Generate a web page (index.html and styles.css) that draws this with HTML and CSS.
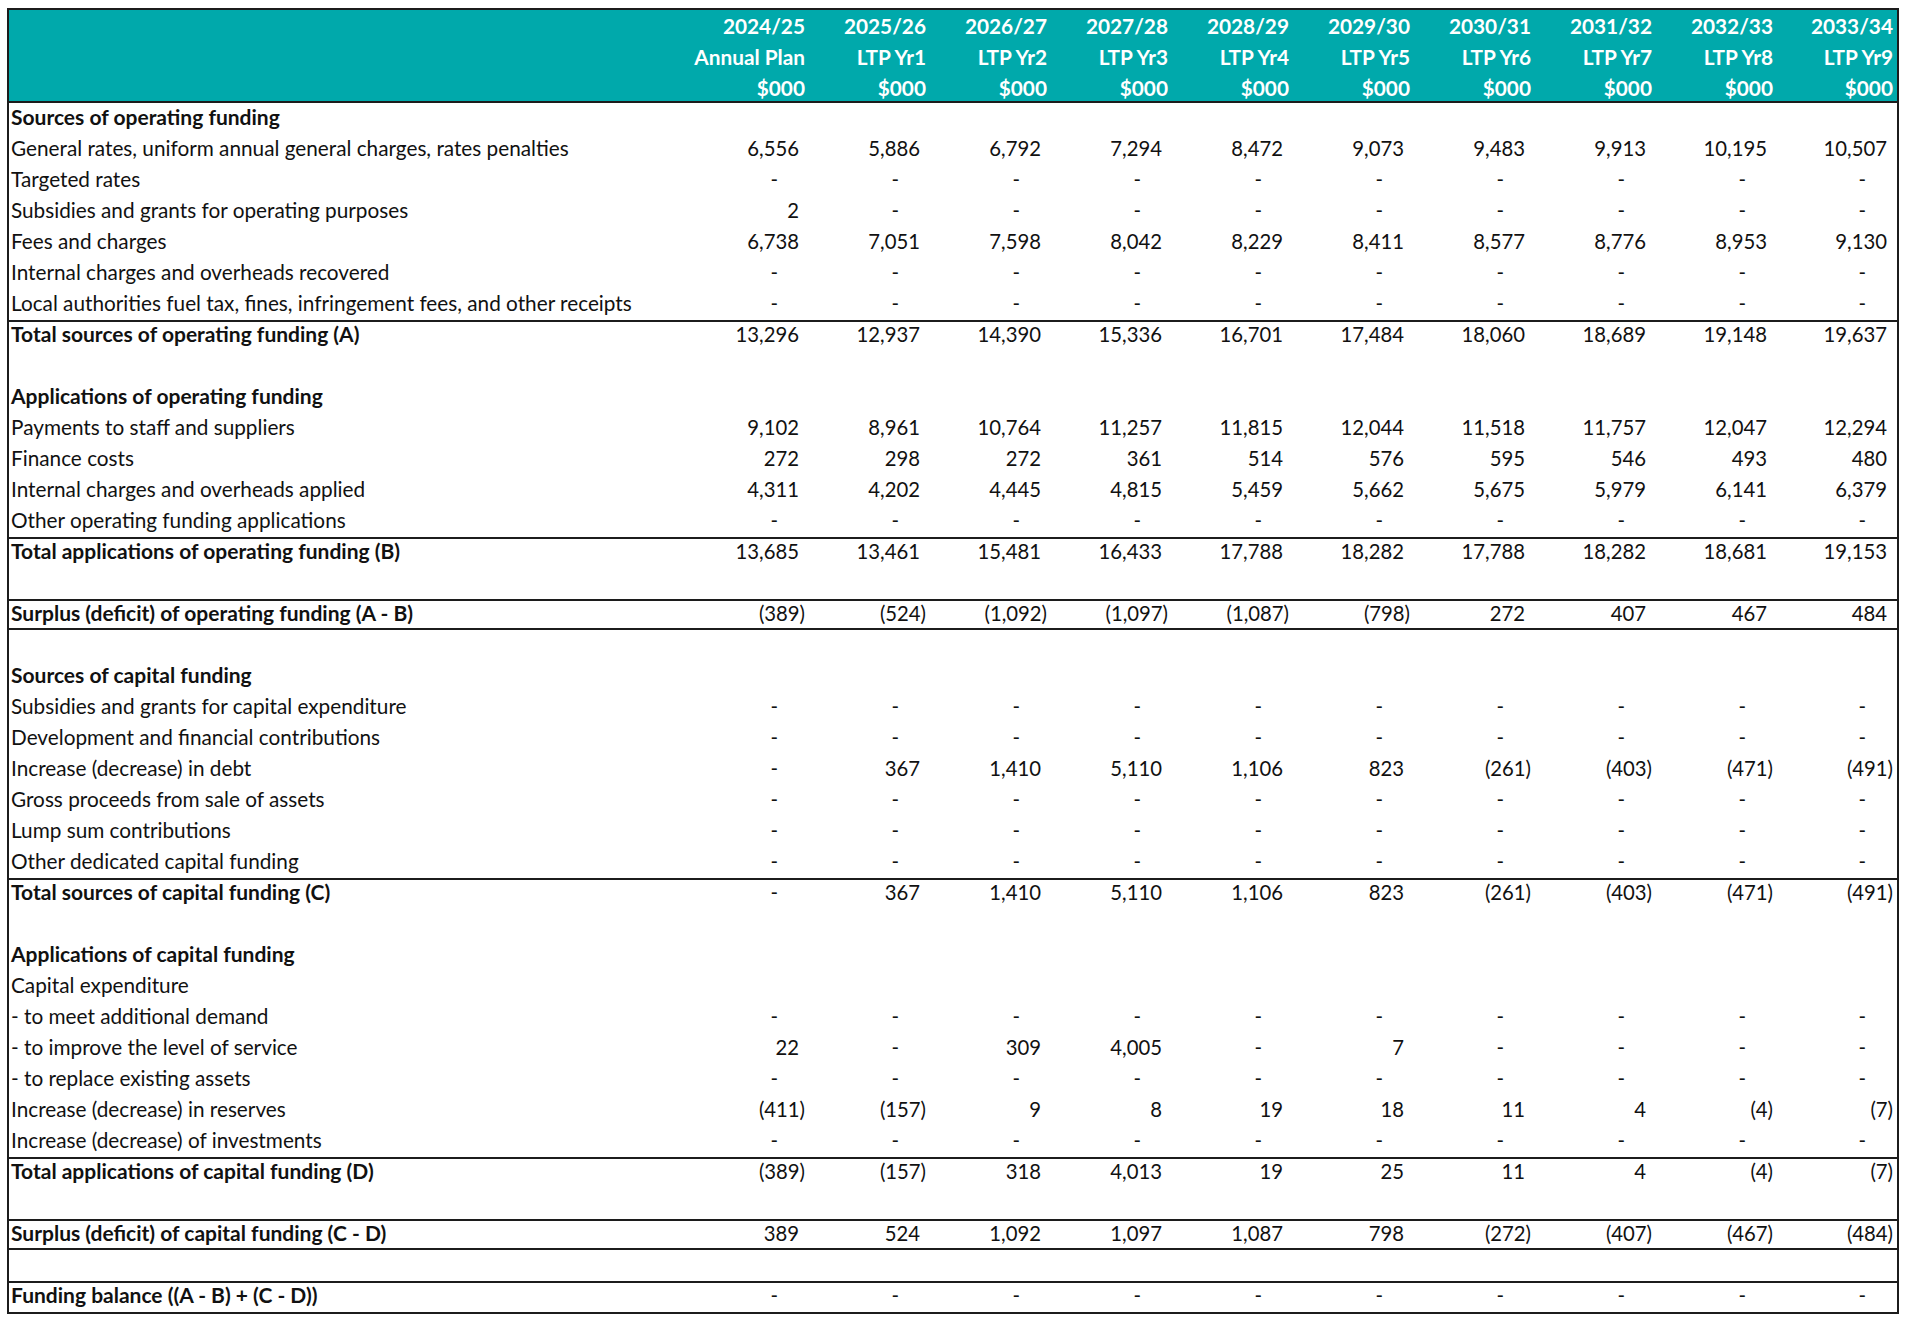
FILE: index.html
```html
<!DOCTYPE html>
<html lang="en">
<head>
<meta charset="utf-8">
<title>Funding impact statement</title>
<link rel="stylesheet" href="styles.css">
</head>
<body>
<table class="fis">
  <colgroup>
    <col class="c-label">
    <col class="c-num"><col class="c-num"><col class="c-num"><col class="c-num"><col class="c-num">
    <col class="c-num"><col class="c-num"><col class="c-num"><col class="c-num"><col class="c-num">
  </colgroup>
  <thead>
    <tr class="h1"><th></th><th>2024/25</th><th>2025/26</th><th>2026/27</th><th>2027/28</th><th>2028/29</th><th>2029/30</th><th>2030/31</th><th>2031/32</th><th>2032/33</th><th>2033/34</th></tr>
    <tr class="h2"><th></th><th>Annual Plan</th><th>LTP Yr1</th><th>LTP Yr2</th><th>LTP Yr3</th><th>LTP Yr4</th><th>LTP Yr5</th><th>LTP Yr6</th><th>LTP Yr7</th><th>LTP Yr8</th><th>LTP Yr9</th></tr>
    <tr class="h3"><th></th><th>$000</th><th>$000</th><th>$000</th><th>$000</th><th>$000</th><th>$000</th><th>$000</th><th>$000</th><th>$000</th><th>$000</th></tr>
  </thead>
  <tbody>
    <tr class="sec"><td>Sources of operating funding</td><td></td><td></td><td></td><td></td><td></td><td></td><td></td><td></td><td></td><td></td></tr>
    <tr><td>General rates, uniform annual general charges, rates penalties</td><td class="p">6,556</td><td class="p">5,886</td><td class="p">6,792</td><td class="p">7,294</td><td class="p">8,472</td><td class="p">9,073</td><td class="p">9,483</td><td class="p">9,913</td><td class="p">10,195</td><td class="p">10,507</td></tr>
    <tr><td>Targeted rates</td><td class="z">-</td><td class="z">-</td><td class="z">-</td><td class="z">-</td><td class="z">-</td><td class="z">-</td><td class="z">-</td><td class="z">-</td><td class="z">-</td><td class="z">-</td></tr>
    <tr><td>Subsidies and grants for operating purposes</td><td class="p">2</td><td class="z">-</td><td class="z">-</td><td class="z">-</td><td class="z">-</td><td class="z">-</td><td class="z">-</td><td class="z">-</td><td class="z">-</td><td class="z">-</td></tr>
    <tr><td>Fees and charges</td><td class="p">6,738</td><td class="p">7,051</td><td class="p">7,598</td><td class="p">8,042</td><td class="p">8,229</td><td class="p">8,411</td><td class="p">8,577</td><td class="p">8,776</td><td class="p">8,953</td><td class="p">9,130</td></tr>
    <tr><td>Internal charges and overheads recovered</td><td class="z">-</td><td class="z">-</td><td class="z">-</td><td class="z">-</td><td class="z">-</td><td class="z">-</td><td class="z">-</td><td class="z">-</td><td class="z">-</td><td class="z">-</td></tr>
    <tr><td>Local authorities fuel tax, fines, infringement fees, and other receipts</td><td class="z">-</td><td class="z">-</td><td class="z">-</td><td class="z">-</td><td class="z">-</td><td class="z">-</td><td class="z">-</td><td class="z">-</td><td class="z">-</td><td class="z">-</td></tr>
    <tr class="tot"><td>Total sources of operating funding (A)</td><td class="p">13,296</td><td class="p">12,937</td><td class="p">14,390</td><td class="p">15,336</td><td class="p">16,701</td><td class="p">17,484</td><td class="p">18,060</td><td class="p">18,689</td><td class="p">19,148</td><td class="p">19,637</td></tr>
    <tr class="blank"><td></td><td></td><td></td><td></td><td></td><td></td><td></td><td></td><td></td><td></td><td></td></tr>
    <tr class="sec"><td>Applications of operating funding</td><td></td><td></td><td></td><td></td><td></td><td></td><td></td><td></td><td></td><td></td></tr>
    <tr><td>Payments to staff and suppliers</td><td class="p">9,102</td><td class="p">8,961</td><td class="p">10,764</td><td class="p">11,257</td><td class="p">11,815</td><td class="p">12,044</td><td class="p">11,518</td><td class="p">11,757</td><td class="p">12,047</td><td class="p">12,294</td></tr>
    <tr><td>Finance costs</td><td class="p">272</td><td class="p">298</td><td class="p">272</td><td class="p">361</td><td class="p">514</td><td class="p">576</td><td class="p">595</td><td class="p">546</td><td class="p">493</td><td class="p">480</td></tr>
    <tr><td>Internal charges and overheads applied</td><td class="p">4,311</td><td class="p">4,202</td><td class="p">4,445</td><td class="p">4,815</td><td class="p">5,459</td><td class="p">5,662</td><td class="p">5,675</td><td class="p">5,979</td><td class="p">6,141</td><td class="p">6,379</td></tr>
    <tr><td>Other operating funding applications</td><td class="z">-</td><td class="z">-</td><td class="z">-</td><td class="z">-</td><td class="z">-</td><td class="z">-</td><td class="z">-</td><td class="z">-</td><td class="z">-</td><td class="z">-</td></tr>
    <tr class="tot"><td>Total applications of operating funding (B)</td><td class="p">13,685</td><td class="p">13,461</td><td class="p">15,481</td><td class="p">16,433</td><td class="p">17,788</td><td class="p">18,282</td><td class="p">17,788</td><td class="p">18,282</td><td class="p">18,681</td><td class="p">19,153</td></tr>
    <tr class="blank"><td></td><td></td><td></td><td></td><td></td><td></td><td></td><td></td><td></td><td></td><td></td></tr>
    <tr class="tot boxed"><td>Surplus (deficit) of operating funding (A - B)</td><td class="m">(389)</td><td class="m">(524)</td><td class="m">(1,092)</td><td class="m">(1,097)</td><td class="m">(1,087)</td><td class="m">(798)</td><td class="p">272</td><td class="p">407</td><td class="p">467</td><td class="p">484</td></tr>
    <tr class="blank"><td></td><td></td><td></td><td></td><td></td><td></td><td></td><td></td><td></td><td></td><td></td></tr>
    <tr class="sec"><td>Sources of capital funding</td><td></td><td></td><td></td><td></td><td></td><td></td><td></td><td></td><td></td><td></td></tr>
    <tr><td>Subsidies and grants for capital expenditure</td><td class="z">-</td><td class="z">-</td><td class="z">-</td><td class="z">-</td><td class="z">-</td><td class="z">-</td><td class="z">-</td><td class="z">-</td><td class="z">-</td><td class="z">-</td></tr>
    <tr><td>Development and financial contributions</td><td class="z">-</td><td class="z">-</td><td class="z">-</td><td class="z">-</td><td class="z">-</td><td class="z">-</td><td class="z">-</td><td class="z">-</td><td class="z">-</td><td class="z">-</td></tr>
    <tr><td>Increase (decrease) in debt</td><td class="z">-</td><td class="p">367</td><td class="p">1,410</td><td class="p">5,110</td><td class="p">1,106</td><td class="p">823</td><td class="m">(261)</td><td class="m">(403)</td><td class="m">(471)</td><td class="m">(491)</td></tr>
    <tr><td>Gross proceeds from sale of assets</td><td class="z">-</td><td class="z">-</td><td class="z">-</td><td class="z">-</td><td class="z">-</td><td class="z">-</td><td class="z">-</td><td class="z">-</td><td class="z">-</td><td class="z">-</td></tr>
    <tr><td>Lump sum contributions</td><td class="z">-</td><td class="z">-</td><td class="z">-</td><td class="z">-</td><td class="z">-</td><td class="z">-</td><td class="z">-</td><td class="z">-</td><td class="z">-</td><td class="z">-</td></tr>
    <tr><td>Other dedicated capital funding</td><td class="z">-</td><td class="z">-</td><td class="z">-</td><td class="z">-</td><td class="z">-</td><td class="z">-</td><td class="z">-</td><td class="z">-</td><td class="z">-</td><td class="z">-</td></tr>
    <tr class="tot"><td>Total sources of capital funding (C)</td><td class="z">-</td><td class="p">367</td><td class="p">1,410</td><td class="p">5,110</td><td class="p">1,106</td><td class="p">823</td><td class="m">(261)</td><td class="m">(403)</td><td class="m">(471)</td><td class="m">(491)</td></tr>
    <tr class="blank"><td></td><td></td><td></td><td></td><td></td><td></td><td></td><td></td><td></td><td></td><td></td></tr>
    <tr class="sec"><td>Applications of capital funding</td><td></td><td></td><td></td><td></td><td></td><td></td><td></td><td></td><td></td><td></td></tr>
    <tr><td>Capital expenditure</td><td></td><td></td><td></td><td></td><td></td><td></td><td></td><td></td><td></td><td></td></tr>
    <tr><td>- to meet additional demand</td><td class="z">-</td><td class="z">-</td><td class="z">-</td><td class="z">-</td><td class="z">-</td><td class="z">-</td><td class="z">-</td><td class="z">-</td><td class="z">-</td><td class="z">-</td></tr>
    <tr><td>- to improve the level of service</td><td class="p">22</td><td class="z">-</td><td class="p">309</td><td class="p">4,005</td><td class="z">-</td><td class="p">7</td><td class="z">-</td><td class="z">-</td><td class="z">-</td><td class="z">-</td></tr>
    <tr><td>- to replace existing assets</td><td class="z">-</td><td class="z">-</td><td class="z">-</td><td class="z">-</td><td class="z">-</td><td class="z">-</td><td class="z">-</td><td class="z">-</td><td class="z">-</td><td class="z">-</td></tr>
    <tr><td>Increase (decrease) in reserves</td><td class="m">(411)</td><td class="m">(157)</td><td class="p">9</td><td class="p">8</td><td class="p">19</td><td class="p">18</td><td class="p">11</td><td class="p">4</td><td class="m">(4)</td><td class="m">(7)</td></tr>
    <tr><td>Increase (decrease) of investments</td><td class="z">-</td><td class="z">-</td><td class="z">-</td><td class="z">-</td><td class="z">-</td><td class="z">-</td><td class="z">-</td><td class="z">-</td><td class="z">-</td><td class="z">-</td></tr>
    <tr class="tot"><td>Total applications of capital funding (D)</td><td class="m">(389)</td><td class="m">(157)</td><td class="p">318</td><td class="p">4,013</td><td class="p">19</td><td class="p">25</td><td class="p">11</td><td class="p">4</td><td class="m">(4)</td><td class="m">(7)</td></tr>
    <tr class="blank"><td></td><td></td><td></td><td></td><td></td><td></td><td></td><td></td><td></td><td></td><td></td></tr>
    <tr class="tot boxed"><td>Surplus (deficit) of capital funding (C - D)</td><td class="p">389</td><td class="p">524</td><td class="p">1,092</td><td class="p">1,097</td><td class="p">1,087</td><td class="p">798</td><td class="m">(272)</td><td class="m">(407)</td><td class="m">(467)</td><td class="m">(484)</td></tr>
    <tr class="blank"><td></td><td></td><td></td><td></td><td></td><td></td><td></td><td></td><td></td><td></td><td></td></tr>
    <tr class="tot"><td>Funding balance ((A - B) + (C - D))</td><td class="z">-</td><td class="z">-</td><td class="z">-</td><td class="z">-</td><td class="z">-</td><td class="z">-</td><td class="z">-</td><td class="z">-</td><td class="z">-</td><td class="z">-</td></tr>
  </tbody>
</table>
</body>
</html>
```
FILE: styles.css
```css
html, body {
  margin: 0;
  padding: 0;
  background: #ffffff;
}

body {
  padding: 8px 0 0 7px;
  font-family: Lato, "Open Sans", "Liberation Sans", sans-serif;
  font-size: 20.3px;
  color: #111111;
}

.fis {
  border-collapse: collapse;
  table-layout: fixed;
  width: 1892px;
  border: 2px solid #1c1c1c;
}

.c-label { width: 680px; }
.c-num { width: 121px; }

.fis th,
.fis td {
  height: 31px;
  padding: 0 4px 0 2px;
  white-space: nowrap;
  vertical-align: middle;
  line-height: 31px;
  box-sizing: border-box;
}

.fis td {
  padding-bottom: 3px;
  line-height: 28px;
}

.fis thead th {
  background: #00a9ab;
  color: #ffffff;
  font-weight: 700;
  font-size: 20.8px;
  text-align: right;
  padding-right: 4px;
}

.fis thead tr.h3 th {
  box-shadow: inset 0 -2px 0 #1c1c1c;
}

.fis td { text-align: right; }
.fis td:first-child {
  text-align: left;
  font-size: 20.75px;
}

.fis td.p { padding-right: 10px; }
.fis td.m { padding-right: 4px; }
.fis td.z { padding-right: 31px; }

.fis tr.sec td:first-child,
.fis tr.tot td:first-child {
  font-weight: 700;
  font-size: 21px;
}

.fis tr.tot td {
  box-shadow: inset 0 2px 0 #1c1c1c;
}

.fis tr.boxed td {
  box-shadow: inset 0 2px 0 #1c1c1c, inset 0 -2px 0 #1c1c1c;
}
```
